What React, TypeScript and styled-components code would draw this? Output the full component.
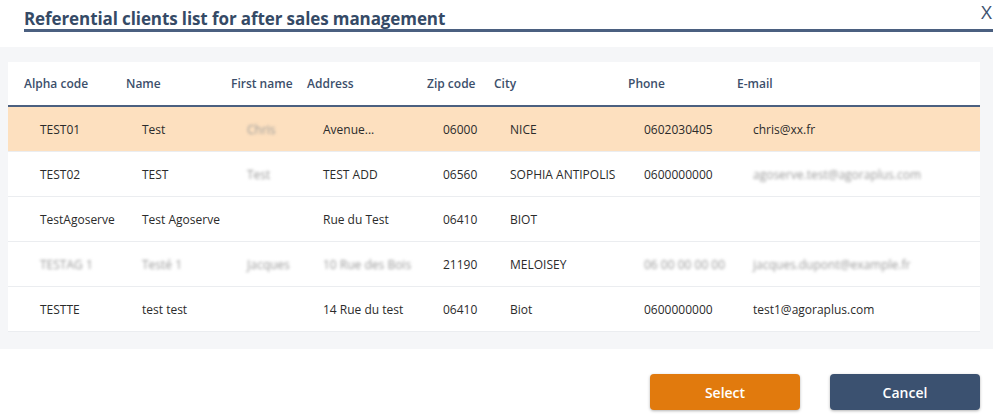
import styled, { createGlobalStyle } from 'styled-components'

const GlobalStyle = createGlobalStyle`
  html, body {
    margin: 0;
    padding: 0;
    background: #ffffff;
    font-family: "Open Sans", "Noto Sans", Arial, sans-serif;
  }
`

const Page = styled.div`
  width: 993px;
  height: 417px;
  display: flex;
  flex-direction: column;
  overflow: hidden;
`

const TitleBar = styled.div`
  position: relative;
  margin-left: 24px;
  padding-top: 8px;
  height: 21px;
  border-bottom: 3px solid #4b6080;
`

const Title = styled.h1`
  margin: 0;
  font-size: 17px;
  line-height: 22px;
  font-weight: 700;
  letter-spacing: -0.1px;
  color: #354a66;
`

const Close = styled.button`
  position: absolute;
  right: 1px;
  top: 1px;
  border: none;
  background: none;
  padding: 0;
  font-family: "Open Sans", Arial, sans-serif;
  font-size: 19px;
  line-height: 22px;
  color: #3d5270;
  cursor: pointer;
`

const Panel = styled.div`
  margin-top: 15px;
  background: #f5f6f8;
  padding: 15px 13px 17px 8px;
`

const Table = styled.div`
  background: #ffffff;
`

const Row = styled.div<{ $head?: boolean; $active?: boolean }>`
  display: grid;
  grid-template-columns: 102px 105px 76px 120px 67px 134px 109px 1fr;
  align-items: center;
  height: ${p => (p.$head ? '43px' : '44px')};
  background: ${p => (p.$active ? '#fde0bf' : '#ffffff')};
  border-bottom: ${p => (p.$head ? '2px solid #4b6080' : '1px solid #ebedf0')};
`

const HeadCell = styled.div`
  padding-left: 16px;
  font-size: 12px;
  font-weight: 600;
  color: #3c4f6b;
  white-space: nowrap;
`

const Cell = styled.div`
  padding-left: 32px;
  font-size: 12px;
  color: #2b2b2b;
  white-space: nowrap;
`

const Hidden = styled.span`
  display: inline-block;
  filter: blur(1.8px);
  color: #9a9a9a;
`

const Footer = styled.div`
  flex: 1;
  display: flex;
  justify-content: flex-end;
  align-items: flex-start;
  gap: 30px;
  padding: 25px 13px 0 0;
`

const Button = styled.button<{ $variant: 'primary' | 'secondary' }>`
  width: 150px;
  height: 36px;
  border: none;
  border-radius: 4px;
  background: ${p => (p.$variant === 'primary' ? '#e17a0d' : '#3b5170')};
  color: #ffffff;
  font-family: "Open Sans", Arial, sans-serif;
  font-size: 14px;
  font-weight: 600;
  box-shadow: 0 1px 3px rgba(0, 0, 0, 0.3);
  cursor: pointer;
`

type Client = {
  alpha: string
  name: string
  first: string
  address: string
  zip: string
  city: string
  phone: string
  email: string
}

const hide = '#'

const clients: Client[] = [
  { alpha: 'TEST01', name: 'Test', first: `${hide}Chris`, address: 'Avenue...', zip: '06000', city: 'NICE', phone: '0602030405', email: 'chris@xx.fr' },
  { alpha: 'TEST02', name: 'TEST', first: `${hide}Test`, address: 'TEST ADD', zip: '06560', city: 'SOPHIA ANTIPOLIS', phone: '0600000000', email: `${hide}agoserve.test@agoraplus.com` },
  { alpha: 'TestAgoserve', name: 'Test Agoserve', first: '', address: 'Rue du Test', zip: '06410', city: 'BIOT', phone: '', email: '' },
  { alpha: `${hide}TESTAG 1`, name: `${hide}Testé 1`, first: `${hide}Jacques`, address: `${hide}10 Rue des Bois`, zip: '21190', city: 'MELOISEY', phone: `${hide}06 00 00 00 00`, email: `${hide}jacques.dupont@example.fr` },
  { alpha: 'TESTTE', name: 'test test', first: '', address: '14 Rue du test', zip: '06410', city: 'Biot', phone: '0600000000', email: 'test1@agoraplus.com' },
]

const Value = ({ text }: { text: string }) =>
  text.startsWith(hide) ? <Hidden>{text.slice(1)}</Hidden> : <>{text}</>

const headers = ['Alpha code', 'Name', 'First name', 'Address', 'Zip code', 'City', 'Phone', 'E-mail']

export default function App() {
  return (
    <Page>
      <GlobalStyle />
      <TitleBar>
        <Title>Referential clients list for after sales management</Title>
        <Close>X</Close>
      </TitleBar>
      <Panel>
        <Table>
          <Row $head>
            {headers.map(h => (
              <HeadCell key={h}>{h}</HeadCell>
            ))}
          </Row>
          {clients.map((c, i) => (
            <Row key={i} $active={i === 0}>
              <Cell><Value text={c.alpha} /></Cell>
              <Cell><Value text={c.name} /></Cell>
              <Cell><Value text={c.first} /></Cell>
              <Cell><Value text={c.address} /></Cell>
              <Cell><Value text={c.zip} /></Cell>
              <Cell><Value text={c.city} /></Cell>
              <Cell><Value text={c.phone} /></Cell>
              <Cell><Value text={c.email} /></Cell>
            </Row>
          ))}
        </Table>
      </Panel>
      <Footer>
        <Button $variant="primary">Select</Button>
        <Button $variant="secondary">Cancel</Button>
      </Footer>
    </Page>
  )
}
